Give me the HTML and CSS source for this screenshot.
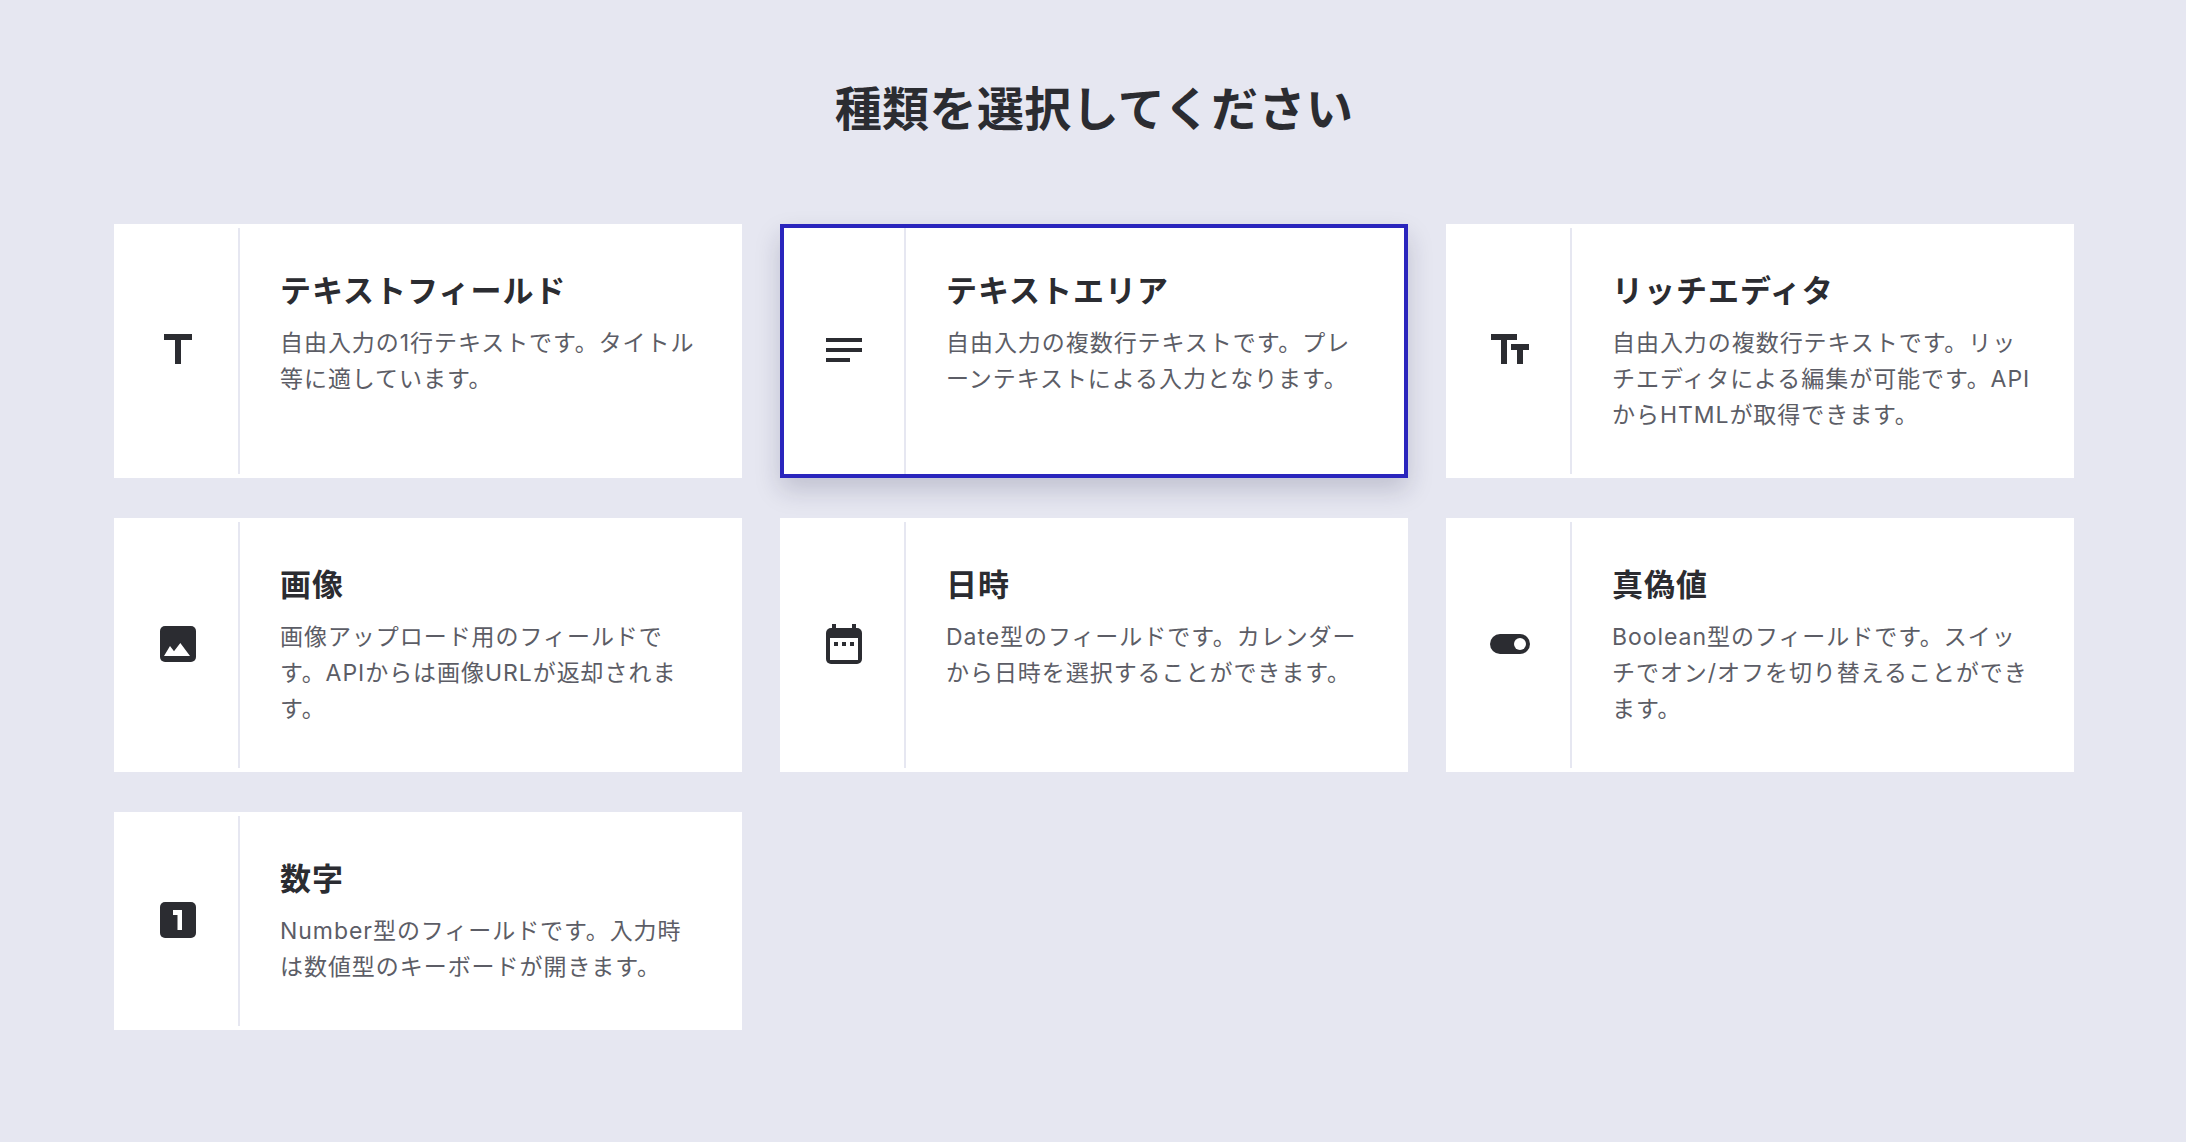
FILE: index.html
```html
<!DOCTYPE html>
<html lang="ja">
<head>
    <meta charset="UTF-8">
    <title>種類を選択してください</title>
    <link rel="stylesheet" href="styles.css">
</head>
<body>
    <div class="page">
        <h1 class="heading">種類を選択してください</h1>
        <div class="types">
            <div class="card">
                <div class="card-icon">
                    <svg viewBox="0 0 40 40"><path d="M6 3h28v6H23v24h-6V9H6z"/></svg>
                </div>
                <div class="card-body">
                    <div class="card-title">テキストフィールド</div>
                    <p class="card-text">自由入力の1行テキストです。タイトル等に適しています。</p>
                </div>
            </div>
            <div class="card selected">
                <div class="card-icon">
                    <svg viewBox="0 0 40 40"><path d="M2 7h36v4H2zM2 17h36v4H2zM2 27h24v4H2z"/></svg>
                </div>
                <div class="card-body">
                    <div class="card-title">テキストエリア</div>
                    <p class="card-text">自由入力の複数行テキストです。プレーンテキストによる入力となります。</p>
                </div>
            </div>
            <div class="card">
                <div class="card-icon">
                    <svg viewBox="0 0 40 40"><path d="M1 3h26v6h-10v24h-6V9H1zM21 13h18v6h-6v14h-6V19h-6z"/></svg>
                </div>
                <div class="card-body">
                    <div class="card-title">リッチエディタ</div>
                    <p class="card-text">自由入力の複数行テキストです。リッチエディタによる編集が可能です。APIからHTMLが取得できます。</p>
                </div>
            </div>
            <div class="card">
                <div class="card-icon">
                    <svg viewBox="0 0 40 40">
                        <rect x="2" y="1" width="36" height="36" rx="5"/>
                        <path class="cut" d="M6 31l6-10 4 5.3 6.300-8.300 9.700 13z"/>
                    </svg>
                </div>
                <div class="card-body">
                    <div class="card-title">画像</div>
                    <p class="card-text">画像アップロード用のフィールドです。APIからは画像URLが返却されます。</p>
                </div>
            </div>
            <div class="card">
                <div class="card-icon">
                    <svg viewBox="0 0 40 40">
                        <path d="M8 -1h4v4h-4zM28 -1h4v4h-4z"/>
                        <rect x="2" y="3" width="36" height="36" rx="5"/>
                        <rect class="cut" x="6" y="13" width="28" height="22"/>
                        <path d="M10 17h4v4h-4zM18 17h4v4h-4zM26 17h4v4h-4z"/>
                    </svg>
                </div>
                <div class="card-body">
                    <div class="card-title">日時</div>
                    <p class="card-text">Date型のフィールドです。カレンダーから日時を選択することができます。</p>
                </div>
            </div>
            <div class="card">
                <div class="card-icon">
                    <svg viewBox="0 0 40 40">
                        <rect x="0" y="9" width="40" height="20" rx="10"/>
                        <circle class="cut" cx="30" cy="19" r="6"/>
                    </svg>
                </div>
                <div class="card-body">
                    <div class="card-title">真偽値</div>
                    <p class="card-text">Boolean型のフィールドです。スイッチでオン/オフを切り替えることができます。</p>
                </div>
            </div>
            <div class="card">
                <div class="card-icon">
                    <svg viewBox="0 0 40 40">
                        <rect x="2" y="1" width="36" height="36" rx="5"/>
                        <path class="cut" d="M15 9h9v20h-4.500V14H15z"/>
                    </svg>
                </div>
                <div class="card-body">
                    <div class="card-title">数字</div>
                    <p class="card-text">Number型のフィールドです。入力時は数値型のキーボードが開きます。</p>
                </div>
            </div>
        </div>
    </div>
</body>
</html>
```

FILE: styles.css
```css
body {
    margin: 0;
    background-color: #e6e7f1;
    color: #2b2c31;
    font-family: Inter, "Noto Sans CJK JP", sans-serif;
}
.page {
    padding: 0 112px 0 114px;
}
.heading {
    margin: 0;
    padding: 77px 0 83px;
    font-size: 47px;
    line-height: 64px;
    font-weight: 700;
    letter-spacing: 0.4px;
    text-align: center;
}
.types {
    display: grid;
    grid-template-columns: repeat(3, 1fr);
    column-gap: 38px;
    row-gap: 40px;
    align-items: stretch;
}
.card {
    display: flex;
    background: #fff;
    border: 4px solid #fff;
}
.card.selected {
    border-color: #2a25bd;
    box-shadow: 0 12px 24px rgba(20, 20, 60, 0.18);
}
.card-icon {
    flex: 0 0 120px;
    display: flex;
    align-items: center;
    justify-content: center;
    border-right: 2px solid #e6e7f1;
}
.card-icon svg {
    width: 40px;
    height: 40px;
    overflow: visible;
    fill: #2b2c31;
}
.card-icon svg .cut {
    fill: #fff;
}
.card-body {
    flex: 1;
    padding: 40px 38px 41px 40px;
    min-width: 0;
}
.card-title {
    font-size: 31px;
    line-height: 46px;
    font-weight: 700;
    letter-spacing: 1px;
    margin-bottom: 11px;
}
.card-text {
    margin: 0;
    font-size: 23px;
    line-height: 36px;
    color: #5c5d66;
    letter-spacing: 0.95px;
}
```
